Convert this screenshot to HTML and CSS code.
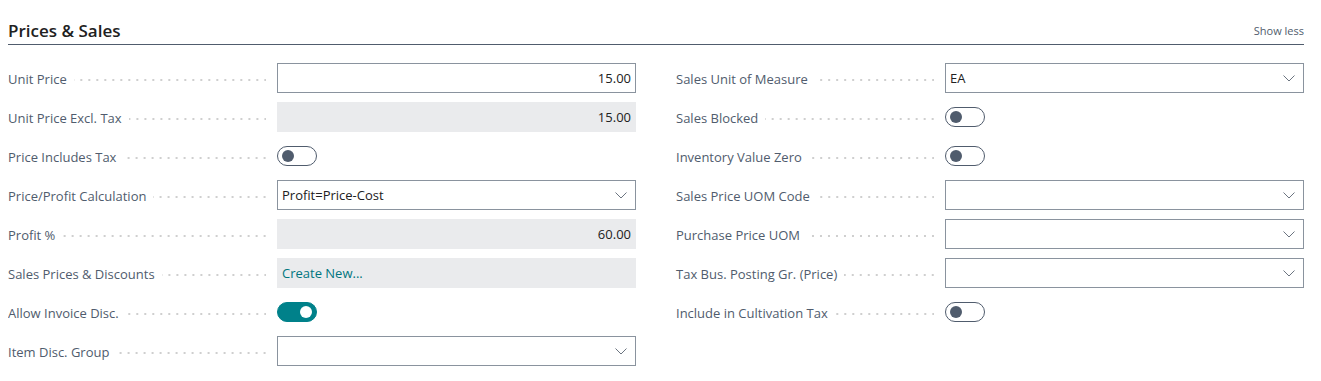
FILE: index.html
```html
<!DOCTYPE html>
<html lang="en">
<head>
  <meta charset="UTF-8" />
  <title>Prices &amp; Sales</title>
  <link rel="stylesheet" href="styles.css">
</head>
<body>
  <section class="fasttab">
    <div class="fasttab-header">
      <h2>Prices &amp; Sales</h2>
      <a class="show-less">Show less</a>
    </div>

    <div class="columns">
      <div class="column">
        <div class="field">
          <label><span>Unit Price</span><i class="leader"></i></label>
          <div class="input number">15.00</div>
        </div>
        <div class="field">
          <label><span>Unit Price Excl. Tax</span><i class="leader"></i></label>
          <div class="input readonly number">15.00</div>
        </div>
        <div class="field">
          <label><span>Price Includes Tax</span><i class="leader"></i></label>
          <div class="toggle"><span class="knob"></span></div>
        </div>
        <div class="field">
          <label><span>Price/Profit Calculation</span><i class="leader"></i></label>
          <div class="input select">Profit=Price-Cost<svg class="chevron" viewBox="0 0 12 7"><path d="M0.5 0.5 L6 6 L11.5 0.5" /></svg></div>
        </div>
        <div class="field">
          <label><span>Profit %</span><i class="leader"></i></label>
          <div class="input readonly number">60.00</div>
        </div>
        <div class="field">
          <label><span>Sales Prices &amp; Discounts</span><i class="leader"></i></label>
          <div class="input readonly link">Create New...</div>
        </div>
        <div class="field">
          <label><span>Allow Invoice Disc.</span><i class="leader"></i></label>
          <div class="toggle on"><span class="knob"></span></div>
        </div>
        <div class="field">
          <label><span>Item Disc. Group</span><i class="leader"></i></label>
          <div class="input select"><svg class="chevron" viewBox="0 0 12 7"><path d="M0.5 0.5 L6 6 L11.5 0.5" /></svg></div>
        </div>
      </div>

      <div class="column">
        <div class="field">
          <label><span>Sales Unit of Measure</span><i class="leader"></i></label>
          <div class="input select">EA<svg class="chevron" viewBox="0 0 12 7"><path d="M0.5 0.5 L6 6 L11.5 0.5" /></svg></div>
        </div>
        <div class="field">
          <label><span>Sales Blocked</span><i class="leader"></i></label>
          <div class="toggle"><span class="knob"></span></div>
        </div>
        <div class="field">
          <label><span>Inventory Value Zero</span><i class="leader"></i></label>
          <div class="toggle"><span class="knob"></span></div>
        </div>
        <div class="field">
          <label><span>Sales Price UOM Code</span><i class="leader"></i></label>
          <div class="input select"><svg class="chevron" viewBox="0 0 12 7"><path d="M0.5 0.5 L6 6 L11.5 0.5" /></svg></div>
        </div>
        <div class="field">
          <label><span>Purchase Price UOM</span><i class="leader"></i></label>
          <div class="input select"><svg class="chevron" viewBox="0 0 12 7"><path d="M0.5 0.5 L6 6 L11.5 0.5" /></svg></div>
        </div>
        <div class="field">
          <label><span>Tax Bus. Posting Gr. (Price)</span><i class="leader"></i></label>
          <div class="input select"><svg class="chevron" viewBox="0 0 12 7"><path d="M0.5 0.5 L6 6 L11.5 0.5" /></svg></div>
        </div>
        <div class="field">
          <label><span>Include in Cultivation Tax</span><i class="leader"></i></label>
          <div class="toggle"><span class="knob"></span></div>
        </div>
      </div>
    </div>
  </section>
</body>
</html>
```

FILE: styles.css
```css
* {
  margin: 0;
  padding: 0;
  box-sizing: border-box;
}

body {
  margin: 0 17px 0 8px;
  background: #ffffff;
  font-family: 'Open Sans', sans-serif;
  font-size: 13px;
  color: #212121;
}

.fasttab-header {
  display: flex;
  align-items: center;
  justify-content: space-between;
  height: 45px;
  padding-top: 17px;
  border-bottom: 1px solid #505c6d;
}

.fasttab-header h2 {
  font-size: 17px;
  font-weight: 600;
  color: #212121;
}

.show-less {
  font-size: 11px;
  color: #505c6d;
  cursor: pointer;
}

.columns {
  display: flex;
  gap: 40px;
  padding-top: 18px;
}

.column {
  flex: 1;
  display: flex;
  flex-direction: column;
  gap: 9px;
}

.field {
  display: flex;
  align-items: center;
  height: 30px;
}

.field label {
  width: 269px;
  display: flex;
  align-items: center;
  color: #505c6d;
  padding-right: 11px;
  padding-top: 1px;
  white-space: nowrap;
}

.leader {
  flex: 1;
  height: 2px;
  margin-left: 7px;
  margin-top: 2px;
  background-image: linear-gradient(to right, transparent 6px, #cfcfcf 6px);
  background-size: 8px 2px;
  background-position: right center;
  background-repeat: repeat-x;
}

.input {
  flex: 1;
  height: 30px;
  display: flex;
  align-items: center;
  padding: 0 4px;
  border: 1px solid #8a939e;
  background: #ffffff;
  color: #212121;
}

.input.readonly {
  border-color: #eaebed;
  background: #eaebed;
}

.input.number {
  justify-content: flex-end;
}

.input.link {
  color: #00767f;
}

.input.select {
  justify-content: space-between;
  padding-right: 8px;
}

.chevron {
  width: 12px;
  height: 7px;
  margin-left: auto;
  fill: none;
  stroke: #6b7480;
  stroke-width: 1;
}

.toggle {
  position: relative;
  width: 40px;
  height: 20px;
  border: 1px solid #505c6d;
  border-radius: 10px;
  background: #ffffff;
}

.toggle .knob {
  position: absolute;
  top: 3px;
  left: 4px;
  width: 12px;
  height: 12px;
  border-radius: 50%;
  background: #505c6d;
}

.toggle.on {
  border-color: #00818a;
  background: #00818a;
}

.toggle.on .knob {
  left: auto;
  right: 4px;
  background: #ffffff;
}
```
